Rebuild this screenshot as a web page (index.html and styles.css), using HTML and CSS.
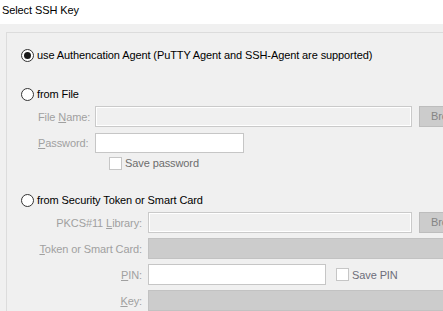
FILE: index.html
```html
<!DOCTYPE html>
<html lang="en">
<head>
<meta charset="UTF-8">
<meta name="viewport" content="width=device-width, initial-scale=1.0">
<title>Select SSH Key</title>
<link rel="stylesheet" href="styles.css">
</head>
<body>

<div class="titlebar">Select SSH Key</div>

<div class="panel">
  <div class="group">

    <div class="radio checked"><span class="circle"></span>use Authencation Agent (PuTTY Agent and SSH-Agent are supported)</div>

    <div class="radio from-file"><span class="circle"></span>from File</div>
    <div class="row file-row">
      <span class="lbl">File <u>N</u>ame:</span>
      <span class="field disabled wide"></span>
      <span class="btn">Browse...</span>
    </div>
    <div class="row file-row">
      <span class="lbl"><u>P</u>assword:</span>
      <span class="field pass"></span>
    </div>
    <div class="check save-pass"><span class="box"></span>Save password</div>

    <div class="radio from-token"><span class="circle"></span>from Security Token or Smart Card</div>
    <div class="row token-row">
      <span class="lbl">PKCS#11 <u>L</u>ibrary:</span>
      <span class="field disabled lib"></span>
      <span class="btn">Browse...</span>
    </div>
    <div class="row token-row">
      <span class="lbl"><u>T</u>oken or Smart Card:</span>
      <span class="field combo"></span>
    </div>
    <div class="row token-row">
      <span class="lbl"><u>P</u>IN:</span>
      <span class="field pin"></span>
      <div class="check save-pin"><span class="box"></span>Save PIN</div>
    </div>
    <div class="row token-row">
      <span class="lbl"><u>K</u>ey:</span>
      <span class="field combo"></span>
    </div>

  </div>
</div>

</body>
</html>
```

FILE: styles.css
```css
body {
  margin: 0;
  width: 443px;
  height: 311px;
  overflow: hidden;
  background-color: #f0f0f0;
  font-family: "Liberation Sans", Arial, sans-serif;
  font-size: 11px;
  letter-spacing: -0.1px;
  color: #000;
}
.titlebar {
  height: 24px;
  padding-left: 2px;
  line-height: 21px;
  background-color: #fff;
  box-sizing: border-box;
}
.panel {
  padding: 8px 0 0 6px;
}
.group {
  width: 560px;
  height: 300px;
  border-top: 1px solid #dcdcdc;
  border-left: 1px solid #dcdcdc;
  padding-left: 14px;
  box-sizing: border-box;
}
.radio {
  display: flex;
  align-items: center;
  height: 16px;
  line-height: 16px;
  white-space: nowrap;
}
.radio .circle {
  width: 11px;
  height: 11px;
  border: 1px solid #333;
  border-radius: 50%;
  background-color: #fff;
  margin-right: 3px;
  position: relative;
}
.radio.checked .circle::after {
  content: "";
  position: absolute;
  top: 2px;
  left: 2px;
  width: 7px;
  height: 7px;
  border-radius: 50%;
  background-color: #1a1a1a;
}
.radio.checked {
  margin-top: 14px;
}
.radio.from-file {
  margin-top: 23px;
}
.radio.from-token {
  margin-top: 22px;
}
.row {
  display: flex;
  align-items: center;
  margin-left: 17px;
  white-space: nowrap;
}
.row > * {
  flex-shrink: 0;
}
.file-row {
  margin-top: 6px;
}
.from-file + .file-row {
  margin-top: 4px;
}
.token-row {
  margin-top: 5px;
}
.from-token + .token-row {
  margin-top: 4px;
}
.lbl {
  color: #a0a0a0;
}
.file-row .lbl {
  width: 57px;
}
.token-row .lbl {
  width: 104px;
  padding-right: 6px;
  text-align: right;
}
.field {
  height: 21px;
  box-sizing: border-box;
  border: 1px solid #c6c6c6;
  background-color: #fff;
}
.field.disabled {
  background-color: #f0f0f0;
  border-color: #cacaca;
  box-shadow: inset 0 0 0 1px #fff;
}
.field.wide {
  width: 317px;
}
.field.pass {
  width: 149px;
  height: 20px;
}
.field.lib {
  width: 264px;
}
.field.combo {
  flex: 1;
  background-color: #cccccc;
  border-color: #c2c2c2;
}
.field.pin {
  width: 178px;
}
.btn {
  width: 80px;
  height: 21px;
  margin-left: 7px;
  box-sizing: border-box;
  border: 1px solid #bdbdbd;
  background-color: #cccccc;
  color: #858585;
  line-height: 19px;
  padding-left: 11px;
}
.check {
  display: flex;
  align-items: center;
  color: #6d6d6d;
  height: 14px;
  white-space: nowrap;
}
.check .box {
  width: 11px;
  height: 11px;
  border: 1px solid #c6c6c6;
  background-color: #fff;
  margin-right: 3px;
}
.save-pass {
  margin-top: 3px;
  margin-left: 88px;
}
.save-pin {
  margin-left: 10px;
  color: #6d6d7a;
}
```
